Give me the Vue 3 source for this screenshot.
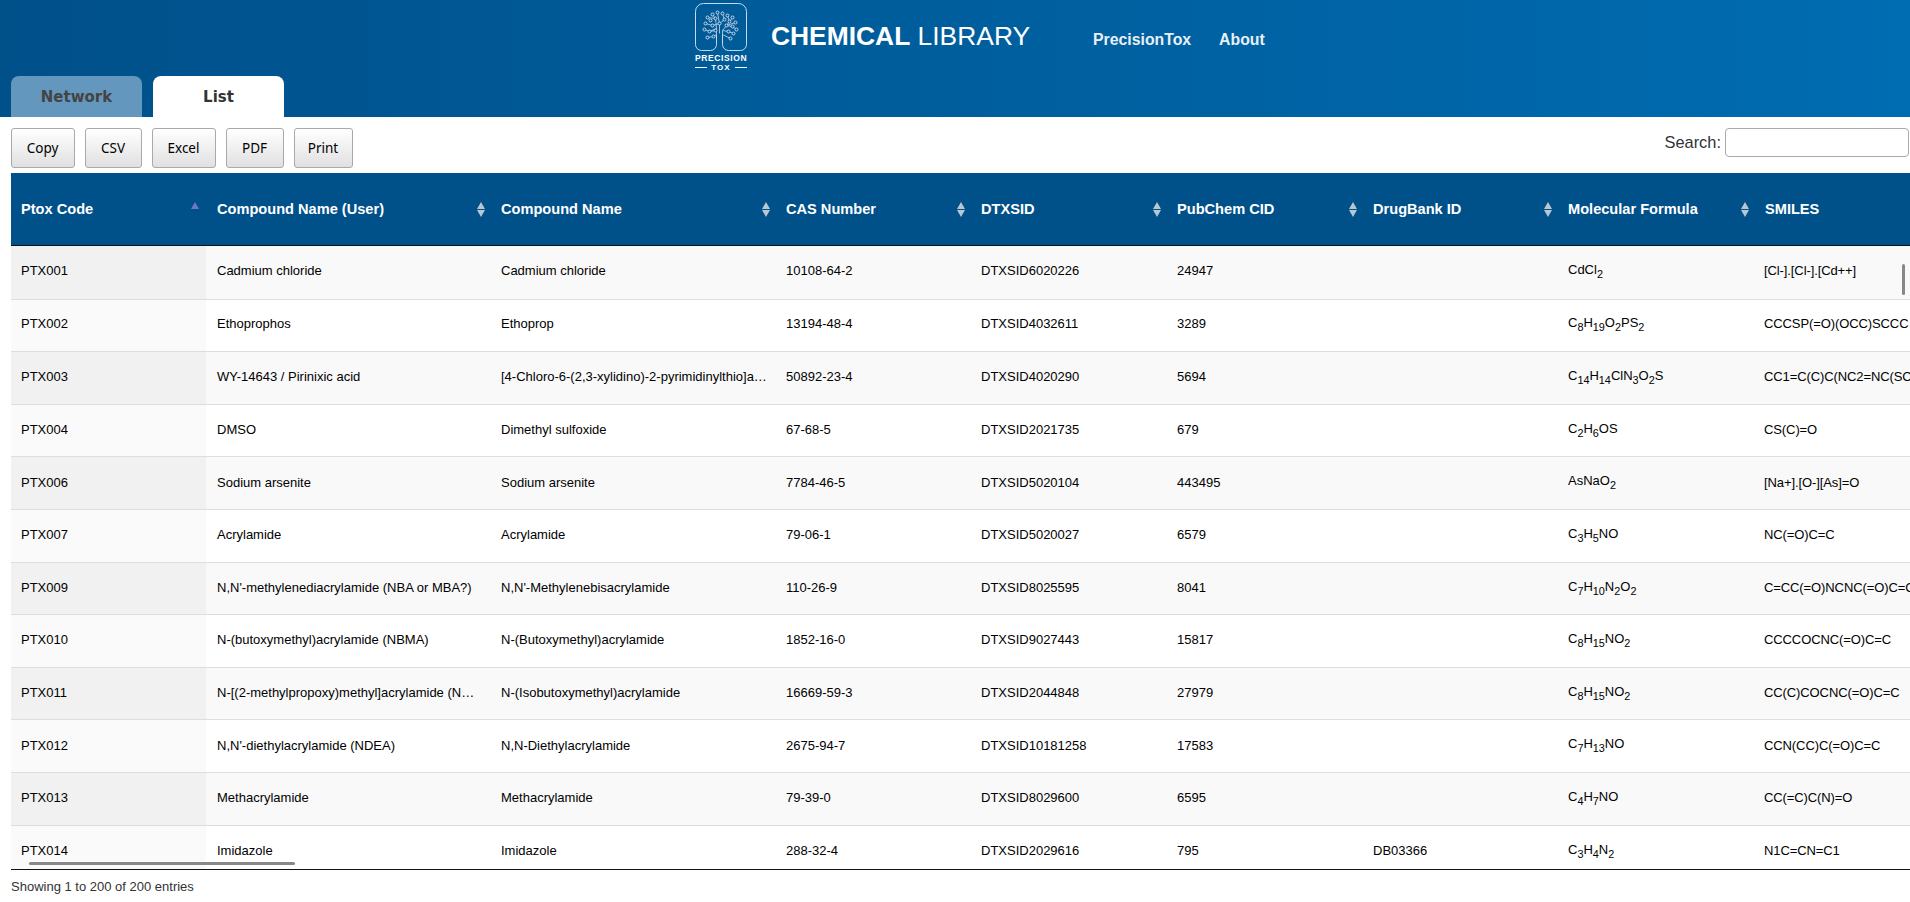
<script setup>
const columns = ['Compound Name (User)', 'Compound Name', 'CAS Number', 'DTXSID', 'PubChem CID', 'DrugBank ID', 'Molecular Formula', 'SMILES']
const widths = [195, 285, 285, 195, 196, 196, 195, 197, 285]
const f = (...parts) => parts
const rows = [
  ['PTX001', 'Cadmium chloride', 'Cadmium chloride', '10108-64-2', 'DTXSID6020226', '24947', '', f('CdCl', [2]), '[Cl-].[Cl-].[Cd++]'],
  ['PTX002', 'Ethoprophos', 'Ethoprop', '13194-48-4', 'DTXSID4032611', '3289', '', f('C', [8], 'H', [19], 'O', [2], 'PS', [2]), 'CCCSP(=O)(OCC)SCCC'],
  ['PTX003', 'WY-14643 / Pirinixic acid', '[4-Chloro-6-(2,3-xylidino)-2-pyrimidinylthio]acetic acid', '50892-23-4', 'DTXSID4020290', '5694', '', f('C', [14], 'H', [14], 'ClN', [3], 'O', [2], 'S'), 'CC1=C(C)C(NC2=NC(SCC(O)=O)=NC(Cl)=C2)=CC=C1'],
  ['PTX004', 'DMSO', 'Dimethyl sulfoxide', '67-68-5', 'DTXSID2021735', '679', '', f('C', [2], 'H', [6], 'OS'), 'CS(C)=O'],
  ['PTX006', 'Sodium arsenite', 'Sodium arsenite', '7784-46-5', 'DTXSID5020104', '443495', '', f('AsNaO', [2]), '[Na+].[O-][As]=O'],
  ['PTX007', 'Acrylamide', 'Acrylamide', '79-06-1', 'DTXSID5020027', '6579', '', f('C', [3], 'H', [5], 'NO'), 'NC(=O)C=C'],
  ['PTX009', "N,N'-methylenediacrylamide (NBA or MBA?)", "N,N'-Methylenebisacrylamide", '110-26-9', 'DTXSID8025595', '8041', '', f('C', [7], 'H', [10], 'N', [2], 'O', [2]), 'C=CC(=O)NCNC(=O)C=C'],
  ['PTX010', 'N-(butoxymethyl)acrylamide (NBMA)', 'N-(Butoxymethyl)acrylamide', '1852-16-0', 'DTXSID9027443', '15817', '', f('C', [8], 'H', [15], 'NO', [2]), 'CCCCOCNC(=O)C=C'],
  ['PTX011', 'N-[(2-methylpropoxy)methyl]acrylamide (NIBMA)', 'N-(Isobutoxymethyl)acrylamide', '16669-59-3', 'DTXSID2044848', '27979', '', f('C', [8], 'H', [15], 'NO', [2]), 'CC(C)COCNC(=O)C=C'],
  ['PTX012', "N,N'-diethylacrylamide (NDEA)", 'N,N-Diethylacrylamide', '2675-94-7', 'DTXSID10181258', '17583', '', f('C', [7], 'H', [13], 'NO'), 'CCN(CC)C(=O)C=C'],
  ['PTX013', 'Methacrylamide', 'Methacrylamide', '79-39-0', 'DTXSID8029600', '6595', '', f('C', [4], 'H', [7], 'NO'), 'CC(=C)C(N)=O'],
  ['PTX014', 'Imidazole', 'Imidazole', '288-32-4', 'DTXSID2029616', '795', 'DB03366', f('C', [3], 'H', [4], 'N', [2]), 'N1C=CN=C1'],
]
const buttons = [['Copy', 64], ['CSV', 57], ['Excel', 64], ['PDF', 58], ['Print', 59]]
const circles = [[17,11],[22,9],[27,10],[32,12],[37,14],[12,14],[15,17],[20,15],[29,16],[34,18],[40,19],[10,20],[17,22],[24,20],[31,22],[37,23],[41,26],[9,26],[14,28],[20,27],[33,28],[38,30],[12,34],[18,33],[35,35]]
</script>

<template>
  <div class="page">
    <header class="header">
      <div class="brand">
        <div class="logo">
          <svg class="logo-mark" viewBox="-0.5 -0.5 52 48" width="52" height="48" fill="none" stroke="#c6d9e9" stroke-width="1">
            <path d="M21 31V41a6 6 0 0 1-6 6H6a6 6 0 0 1-6-6V8a8 8 0 0 1 8-8H43a8 8 0 0 1 8 8V41a6 6 0 0 1-6 6H33a6 6 0 0 1-6-6V31" />
            <path stroke-width="0.8" d="M21 31L18 33L12 34M27 31L35 35M21 31V25L14 28L9 26M27 31V27L33 28L38 30M24 30V20L22 9M24 20L17 22L10 20M24 20L29 16L27 10M21 25L20 15L17 11M20 15L12 14M27 27L31 22L34 18L32 12M34 18L37 14M31 22L40 19M31 22L37 23L41 26M20 27L14 28" />
            <circle v-for="c in circles" :key="c.join()" :cx="c[0]" :cy="c[1]" r="1.5" fill="#00578f" />
          </svg>
          <div class="logo-name">PRECISION</div>
          <div class="logo-tox"><i></i>TOX<i></i></div>
        </div>
        <h1 class="title"><b>CHEMICAL</b> LIBRARY</h1>
        <nav class="nav">
          <a>PrecisionTox</a>
          <a>About</a>
        </nav>
      </div>
      <div class="tabs">
        <div class="tab inactive">Network</div>
        <div class="tab active">List</div>
      </div>
    </header>

    <div class="toolbar">
      <div class="buttons">
        <button v-for="b in buttons" :key="b[0]" class="btn" :style="{ width: b[1] + 'px' }">{{ b[0] }}</button>
      </div>
      <label class="search">Search:<input type="text" /></label>
    </div>

    <div class="scroller">
      <table class="table">
        <colgroup>
          <col v-for="(w, i) in widths" :key="i" :style="{ width: w + 'px' }" />
        </colgroup>
        <thead>
          <tr>
            <th class="sorted">Ptox Code<span class="sort first"><i class="up on"></i></span></th>
            <th v-for="(c, i) in columns" :key="c">{{ c }}<span v-if="i < 7" class="sort"><i class="up"></i><i class="down"></i></span></th>
          </tr>
        </thead>
        <tbody>
          <tr v-for="r in rows" :key="r[0]">
            <td v-for="(v, i) in r" :key="i">
              <template v-if="Array.isArray(v)">
                <template v-for="(p, j) in v" :key="j"><sub v-if="Array.isArray(p)">{{ p[0] }}</sub><template v-else>{{ p }}</template></template>
              </template>
              <template v-else>{{ v }}</template>
            </td>
          </tr>
        </tbody>
      </table>
      <div class="thumb-v"></div>
      <div class="thumb-h"></div>
    </div>
    <div class="info">Showing 1 to 200 of 200 entries</div>
  </div>
</template>

<style>
html, body { margin: 0; background: #fff; overflow: hidden; }
</style>

<style scoped>
.page { width: 1910px; height: 902px; overflow: hidden; font-family: "Liberation Sans", Arial, sans-serif; color: #000; }
.header { height: 117px; box-sizing: border-box; background: linear-gradient(90deg, #00508a 0%, #006cb1 100%); display: flex; flex-direction: column; justify-content: space-between; }
.brand { display: flex; align-items: flex-start; padding-left: 695px; height: 75px; }
.logo { width: 52px; padding-top: 3px; color: #fff; text-align: center; }
.logo-mark { display: block; }
.logo-name { font-size: 8.5px; font-weight: 700; letter-spacing: 0.6px; line-height: 9px; margin-top: 3px; white-space: nowrap; }
.logo-tox { font-size: 8px; line-height: 9px; letter-spacing: 1px; font-weight: 700; display: flex; align-items: center; justify-content: center; gap: 4px; }
.logo-tox i { display: block; width: 13px; height: 1px; background: #fff; }
.title { margin: 21px 0 0 24px; font-size: 26.4px; font-weight: 400; line-height: 30px; color: #fff; white-space: nowrap; }
.nav { display: flex; gap: 28px; margin: 31px 0 0 63px; }
.nav a { color: #e8f0f6; font-size: 15.8px; font-weight: 700; line-height: 18px; }
.tabs { display: flex; gap: 11px; padding-left: 11px; }
.tab { width: 131px; height: 41px; padding-top: 1px; border-radius: 8px 8px 0 0; text-align: center; font: 700 15px/41px "DejaVu Sans", sans-serif; box-sizing: border-box; }
.inactive { background: #6497be; color: #444; }
.active { background: #fff; color: #333; }
.toolbar { height: 56px; padding: 11px 1px 0 11px; box-sizing: border-box; display: flex; justify-content: space-between; align-items: flex-start; }
.buttons { display: flex; gap: 10px; }
.btn { height: 40px; box-sizing: border-box; border: 1px solid #a9a9a9; border-radius: 3px; background: linear-gradient(180deg, #fff 0%, #e0e0e0 100%); font: 13.5px "Noto Sans", sans-serif; color: #000; padding: 0 1px 0 0; }
.search { display: flex; align-items: center; gap: 4px; font-size: 16.4px; color: #333; height: 29px; }
.search input { width: 184px; height: 29px; box-sizing: border-box; border: 1px solid #aaa; border-radius: 4px; background: #fff; padding: 0; margin: 0; }
.scroller { margin-left: 11px; height: 696px; overflow: hidden; position: relative; border-bottom: 1px solid #111; }
.table { border-collapse: separate; border-spacing: 0; table-layout: fixed; width: 2029px; font-size: 13px; }
th { height: 73px; box-sizing: border-box; padding: 0 10px; background: #00508a; color: #fff; font-size: 14.6px; font-weight: 700; text-align: left; position: relative; border-bottom: 1px solid #111; white-space: nowrap; overflow: hidden; }
td { height: 52.6px; box-sizing: border-box; padding: 0 10px 2px; border-bottom: 1px solid #ddd; white-space: nowrap; overflow: hidden; text-overflow: ellipsis; background: #fff; color: #000; }
th:nth-child(2), td:nth-child(2) { padding-left: 11px; padding-right: 15px; }
td:nth-child(3) { padding-right: 8px; }
td:nth-child(9) { padding-left: 9px; letter-spacing: -0.1px; }
tbody tr:first-child td { height: 53.6px; padding-bottom: 4px; }
tbody tr:nth-child(2) td { padding-bottom: 3px; }
tbody tr:nth-child(odd) td { background: #f9f9f9; }
tbody td:first-child { background: #fafafa; }
tbody tr:nth-child(odd) td:first-child { background: #f1f1f1; }
.sort { position: absolute; right: 5px; top: 29px; width: 9px; height: 15px; }
.sort.first { right: 6px; }
.sort i { position: absolute; left: 0; width: 0; height: 0; border-left: 4.5px solid transparent; border-right: 4.5px solid transparent; }
.sort .up { top: 0; border-bottom: 7px solid #b9c7d3; }
.sort .up.on { border-bottom-color: #7474c6; }
.sort .down { bottom: 0; border-top: 7px solid #b9c7d3; }
.thumb-v { position: absolute; left: 1891px; top: 91px; width: 3px; height: 31px; background: #888; border-radius: 2px; }
.thumb-h { position: absolute; left: 18px; top: 689px; width: 266px; height: 3px; background: #888; border-radius: 2px; }
.info { font-size: 13px; color: #333; margin: 9px 0 0 11px; line-height: 15px; }
</style>
